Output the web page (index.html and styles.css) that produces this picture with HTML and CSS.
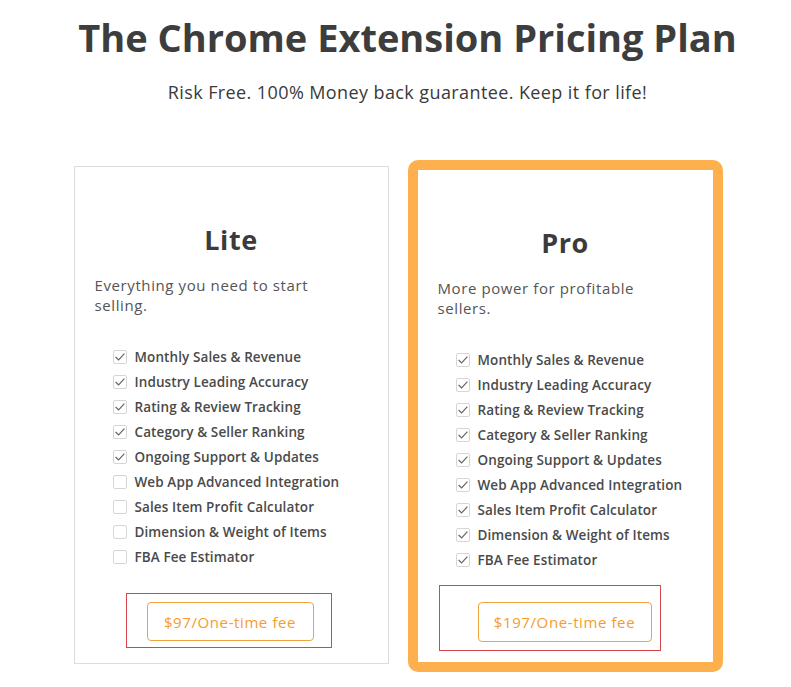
FILE: index.html
```html
<!DOCTYPE html>
<html lang="en">
<head>
<meta charset="utf-8">
<title>Pricing</title>
<link rel="stylesheet" href="styles.css">
</head>
<body>
<h1 class="title">The Chrome Extension Pricing Plan</h1>
<p class="subtitle">Risk Free. 100% Money back guarantee. Keep it for life!</p>
<div class="plans">
  <div class="card card-lite">
    <h2 class="plan-name">Lite</h2>
    <p class="plan-desc">Everything you need to start selling.</p>
    <ul class="features">
      <li class="on"><span class="box"><svg viewBox="0 0 14 14"><path d="M2.6 7 L5.6 10 L11.4 3.6"/></svg></span>Monthly Sales &amp; Revenue</li>
      <li class="on"><span class="box"><svg viewBox="0 0 14 14"><path d="M2.6 7 L5.6 10 L11.4 3.6"/></svg></span>Industry Leading Accuracy</li>
      <li class="on"><span class="box"><svg viewBox="0 0 14 14"><path d="M2.6 7 L5.6 10 L11.4 3.6"/></svg></span>Rating &amp; Review Tracking</li>
      <li class="on"><span class="box"><svg viewBox="0 0 14 14"><path d="M2.6 7 L5.6 10 L11.4 3.6"/></svg></span>Category &amp; Seller Ranking</li>
      <li class="on"><span class="box"><svg viewBox="0 0 14 14"><path d="M2.6 7 L5.6 10 L11.4 3.6"/></svg></span>Ongoing Support &amp; Updates</li>
      <li><span class="box"></span>Web App Advanced Integration</li>
      <li><span class="box"></span>Sales Item Profit Calculator</li>
      <li><span class="box"></span>Dimension &amp; Weight of Items</li>
      <li><span class="box"></span>FBA Fee Estimator</li>
    </ul>
    <div class="price-frame">
      <a class="price-btn" href="#">$97/One-time fee</a>
    </div>
  </div>
  <div class="card card-pro">
    <h2 class="plan-name">Pro</h2>
    <p class="plan-desc">More power for profitable sellers.</p>
    <ul class="features">
      <li class="on"><span class="box"><svg viewBox="0 0 14 14"><path d="M2.6 7 L5.6 10 L11.4 3.6"/></svg></span>Monthly Sales &amp; Revenue</li>
      <li class="on"><span class="box"><svg viewBox="0 0 14 14"><path d="M2.6 7 L5.6 10 L11.4 3.6"/></svg></span>Industry Leading Accuracy</li>
      <li class="on"><span class="box"><svg viewBox="0 0 14 14"><path d="M2.6 7 L5.6 10 L11.4 3.6"/></svg></span>Rating &amp; Review Tracking</li>
      <li class="on"><span class="box"><svg viewBox="0 0 14 14"><path d="M2.6 7 L5.6 10 L11.4 3.6"/></svg></span>Category &amp; Seller Ranking</li>
      <li class="on"><span class="box"><svg viewBox="0 0 14 14"><path d="M2.6 7 L5.6 10 L11.4 3.6"/></svg></span>Ongoing Support &amp; Updates</li>
      <li class="on"><span class="box"><svg viewBox="0 0 14 14"><path d="M2.6 7 L5.6 10 L11.4 3.6"/></svg></span>Web App Advanced Integration</li>
      <li class="on"><span class="box"><svg viewBox="0 0 14 14"><path d="M2.6 7 L5.6 10 L11.4 3.6"/></svg></span>Sales Item Profit Calculator</li>
      <li class="on"><span class="box"><svg viewBox="0 0 14 14"><path d="M2.6 7 L5.6 10 L11.4 3.6"/></svg></span>Dimension &amp; Weight of Items</li>
      <li class="on"><span class="box"><svg viewBox="0 0 14 14"><path d="M2.6 7 L5.6 10 L11.4 3.6"/></svg></span>FBA Fee Estimator</li>
    </ul>
    <div class="price-frame">
      <a class="price-btn" href="#">$197/One-time fee</a>
    </div>
  </div>
</div>
</body>
</html>
```
FILE: styles.css
```css
* { box-sizing: border-box; }
body {
  margin: 0;
  background: #fff;
  font-family: "Open Sans", "Liberation Sans", sans-serif;
  color: #444;
}
.title {
  margin: 14px 0 0;
  padding-left: 24px;
  text-align: center;
  font-family: "Open Sans", "Liberation Sans", sans-serif;
  font-weight: 700;
  font-size: 38px;
  line-height: 46px;
  color: #3d3d3d;
  letter-spacing: 0;
}
.subtitle {
  margin: 20px 0 0;
  padding-left: 24px;
  text-align: center;
  font-size: 18px;
  line-height: 24px;
  color: #3a3a3a;
  letter-spacing: 0.4px;
}
.plans {
  display: flex;
  justify-content: center;
  align-items: flex-start;
  gap: 19px;
  margin-top: 56px;
  padding-left: 5px;
}
.card {
  width: 315px;
  background: #fff;
}
.card-lite {
  margin-top: 6px;
  border: 1px solid #dcdcdc;
  padding: 57px 20px 15px;
}
.card-pro {
  border: 10px solid #fdb04d;
  border-radius: 10px;
  padding: 57px 20px 11px;
}
.plan-name {
  margin: 0;
  text-align: center;
  font-size: 27px;
  line-height: 32px;
  font-weight: 700;
  color: #3b3b3b;
  letter-spacing: 0.6px;
}
.plan-desc {
  margin: 19px 0 0;
  max-width: 230px;
  font-size: 15px;
  line-height: 20px;
  color: #555;
  letter-spacing: 0.6px;
}
.features {
  list-style: none;
  margin: 29px 0 0;
  padding: 0 0 0 18px;
}
.features li {
  display: flex;
  align-items: center;
  height: 25px;
  font-size: 13.5px;
  font-weight: 600;
  color: #4a4a4a;
  letter-spacing: 0.1px;
}
.box {
  width: 14px;
  height: 14px;
  border: 1px solid #d6d6d6;
  border-radius: 2px;
  margin-right: 8px;
  flex: none;
  position: relative;
}
.box svg {
  position: absolute;
  left: -1px;
  top: -1px;
  width: 14px;
  height: 14px;
  fill: none;
  stroke: #666;
  stroke-width: 1.2;
}
.price-frame {
  border: 1px solid #d9434a;
}
.card-lite .price-frame {
  width: 206px;
  margin: 24px 0 0 31px;
  padding: 8px 0 6px 20px;
}
.card-pro .price-frame {
  width: 222px;
  margin: 13px 0 0 1px;
  padding: 16px 0 8px 38px;
}
.price-btn {
  display: flex;
  align-items: center;
  justify-content: center;
  height: 39px;
  border: 1px solid #efa43f;
  border-radius: 4px;
  color: #f59c2c;
  font-size: 15px;
  font-weight: 500;
  text-decoration: none;
  letter-spacing: 0.6px;
}
.card-lite .price-btn { width: 167px; }
.card-pro .price-btn { width: 174px; height: 40px; }
```
